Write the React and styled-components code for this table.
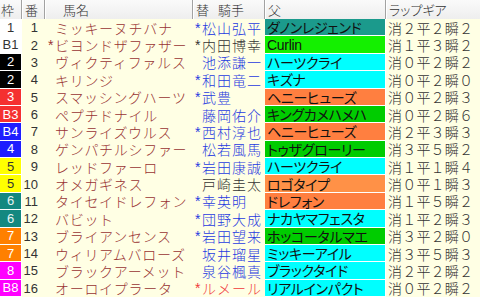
import React from 'react'
import styled, { createGlobalStyle } from 'styled-components'

const GlobalStyle = createGlobalStyle`
  html, body {
    margin: 0;
    padding: 0;
    background: #ffffff;
  }
  body {
    font-family: "Liberation Sans", "Noto Sans CJK JP", sans-serif;
  }
`

const COLS = '22px 23px 148px 72px 121px 94px'

const WAKU = {
  1: ['#ffffff', '#333333'],
  2: ['#000000', '#ffffff'],
  3: ['#f53030', '#ffffff'],
  4: ['#1e1eff', '#ffffff'],
  5: ['#ffff00', '#333333'],
  6: ['#138880', '#e8f4f4'],
  7: ['#ff8000', '#ffffff'],
  8: ['#ff00ff', '#ffffff'],
}

const SIRE = {
  teal: '#1b9a8c',
  lime: '#14f000',
  green: '#00cc00',
  cyan: '#00ffff',
  orange: '#ff7f40',
  light: '#ff9147',
}

const JOCKEY = {
  blue: '#1f3be0',
  black: '#333333',
  red: '#f03a3a',
}

const rows = [
  { waku: 1, label: '1', no: 1, mark: '', name: 'ミッキーヌチバナ', jm: '*', jockey: '松山弘平', jc: 'blue', sire: 'ダノンレジェンド', sc: 'teal', gear: '消２平２瞬２' },
  { waku: 1, label: 'B1', no: 2, mark: '*', name: 'ビヨンドザファザー', jm: '*', jockey: '内田博幸', jc: 'black', sire: 'Curlin', sc: 'lime', gear: '消１平３瞬２' },
  { waku: 2, label: '2', no: 3, mark: '', name: 'ヴィクティファルス', jm: '', jockey: '池添謙一', jc: 'blue', sire: 'ハーツクライ', sc: 'cyan', gear: '消０平２瞬２' },
  { waku: 2, label: '2', no: 4, mark: '', name: 'キリンジ', jm: '*', jockey: '和田竜二', jc: 'blue', sire: 'キズナ', sc: 'cyan', gear: '消０平２瞬０' },
  { waku: 3, label: '3', no: 5, mark: '', name: 'スマッシングハーツ', jm: '*', jockey: '武豊', jc: 'blue', sire: 'ヘニーヒューズ', sc: 'orange', gear: '消０平２瞬３' },
  { waku: 3, label: 'B3', no: 6, mark: '', name: 'ペプチドナイル', jm: '', jockey: '藤岡佑介', jc: 'blue', sire: 'キングカメハメハ', sc: 'green', gear: '消０平２瞬６' },
  { waku: 4, label: 'B4', no: 7, mark: '', name: 'サンライズウルス', jm: '*', jockey: '西村淳也', jc: 'blue', sire: 'ヘニーヒューズ', sc: 'orange', gear: '消２平３瞬３' },
  { waku: 4, label: '4', no: 8, mark: '', name: 'ゲンパチルシファー', jm: '', jockey: '松若風馬', jc: 'blue', sire: 'トゥザグローリー', sc: 'green', gear: '消３平５瞬２' },
  { waku: 5, label: '5', no: 9, mark: '', name: 'レッドファーロ', jm: '*', jockey: '岩田康誠', jc: 'blue', sire: 'ハーツクライ', sc: 'cyan', gear: '消１平１瞬４' },
  { waku: 5, label: '5', no: 10, mark: '', name: 'オメガギネス', jm: '', jockey: '戸崎圭太', jc: 'black', sire: 'ロゴタイプ', sc: 'light', gear: '消０平１瞬３' },
  { waku: 6, label: '6', no: 11, mark: '', name: 'タイセイドレフォン', jm: '*', jockey: '幸英明', jc: 'blue', sire: 'ドレフォン', sc: 'orange', gear: '消１平５瞬２' },
  { waku: 6, label: '6', no: 12, mark: '', name: 'バビット', jm: '*', jockey: '団野大成', jc: 'blue', sire: 'ナカヤマフェスタ', sc: 'cyan', gear: '消１平２瞬３' },
  { waku: 7, label: '7', no: 13, mark: '', name: 'ブライアンセンス', jm: '*', jockey: '岩田望来', jc: 'blue', sire: 'ホッコータルマエ', sc: 'green', gear: '消３平２瞬０' },
  { waku: 7, label: '7', no: 14, mark: '', name: 'ウィリアムバローズ', jm: '', jockey: '坂井瑠星', jc: 'blue', sire: 'ミッキーアイル', sc: 'cyan', gear: '消３平５瞬３' },
  { waku: 8, label: '8', no: 15, mark: '', name: 'ブラックアーメット', jm: '', jockey: '泉谷楓真', jc: 'blue', sire: 'ブラックタイド', sc: 'cyan', gear: '消２平２瞬２' },
  { waku: 8, label: 'B8', no: 16, mark: '', name: 'オーロイプラータ', jm: '*', jockey: 'ルメール', jc: 'red', sire: 'リアルインパクト', sc: 'cyan', gear: '消０平２瞬２' },
]

export default function App() {
  return (
    <>
      <GlobalStyle />
      <Board>
        <Head>
          <HeadCell $pad={1}>枠</HeadCell>
          <HeadCell $pad={2}>番</HeadCell>
          <HeadCell $pad={17}>馬名</HeadCell>
          <HeadCell $pad={2} $gap={9}><span>替</span><span>騎手</span></HeadCell>
          <HeadCell $pad={2}>父</HeadCell>
          <HeadCell $pad={2} $palt>ラップギア</HeadCell>
        </Head>
        {rows.map((r) => (
          <Row key={r.no}>
            <Waku $bg={WAKU[r.waku][0]} $fg={WAKU[r.waku][1]}>{r.label}</Waku>
            <Num>{r.no}</Num>
            <Horse>
              <Mark>{r.mark}</Mark>
              {r.name}
            </Horse>
            <Jockey $color={JOCKEY[r.jc]}>
              <Mark>{r.jm}</Mark>
              {r.jockey}
            </Jockey>
            <Sire $bg={SIRE[r.sc]}>{r.sire}</Sire>
            <Gear>{r.gear}</Gear>
          </Row>
        ))}
      </Board>
    </>
  )
}

const Board = styled.div`
  width: 480px;
  height: 297px;
  display: flex;
  flex-direction: column;
  background: #ffffe4;
  overflow: hidden;
`

const Head = styled.div`
  height: 19px;
  flex: none;
  display: grid;
  grid-template-columns: ${COLS};
  background: linear-gradient(#fafafa, #eeeeee);
`

const HeadCell = styled.div`
  display: flex;
  align-items: center;
  gap: ${({ $gap }) => ($gap ? `${$gap}px` : '0')};
  padding-left: ${({ $pad }) => $pad}px;
  font-size: 13px;
  font-weight: 300;
  color: #333333;
  white-space: nowrap;
  border-left: 1px solid #ffffff;
  border-right: 1px solid #a2a2a2;
  font-feature-settings: ${({ $palt }) => ($palt ? '"palt"' : 'normal')};
  &:first-child {
    border-left: none;
  }
  &:last-child {
    border-right: none;
  }
`

const Row = styled.div`
  flex: 1;
  min-height: 0;
  display: grid;
  grid-template-columns: ${COLS};
  font-size: 14px;
  font-weight: 300;
  white-space: nowrap;
`

const Waku = styled.div`
  display: flex;
  align-items: center;
  justify-content: center;
  background: ${({ $bg }) => $bg};
  color: ${({ $fg }) => $fg};
  font-size: 13px;
  font-weight: 400;
  border-right: 1px solid #ffffff;
  border-bottom: 1px solid #ffffff;
`

const Num = styled.div`
  display: flex;
  align-items: center;
  justify-content: flex-end;
  padding-right: 7px;
  font-size: 13px;
  font-weight: 400;
  color: #333333;
`

const Mark = styled.span`
  display: inline-block;
  width: 7px;
  font-size: 14px;
`

const Horse = styled.div`
  display: flex;
  align-items: center;
  padding-left: 3px;
  color: #993333;
  letter-spacing: 0.7px;
  overflow: hidden;
`

const Jockey = styled.div`
  display: flex;
  align-items: center;
  padding-left: 2px;
  color: ${({ $color }) => $color};
  letter-spacing: 1px;
  overflow: hidden;
`

const Sire = styled.div`
  display: flex;
  align-items: center;
  padding-left: 2px;
  background: ${({ $bg }) => $bg};
  color: #111111;
  font-weight: 400;
  font-feature-settings: "palt";
  letter-spacing: -0.3px;
  border-right: 1px solid #ffffff;
  border-bottom: 1px solid #ffffff;
  overflow: hidden;
`

const Gear = styled.div`
  display: flex;
  align-items: center;
  padding-left: 2px;
  color: #333333;
  letter-spacing: 0.2px;
  overflow: hidden;
`
